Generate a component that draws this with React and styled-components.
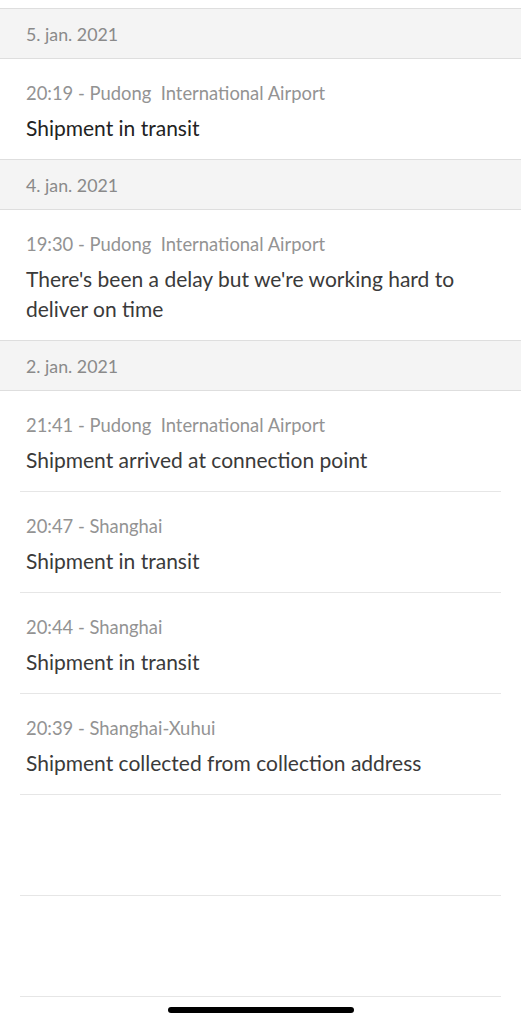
import React from 'react';
import styled, { createGlobalStyle } from 'styled-components';

const GlobalStyle = createGlobalStyle`
  html, body {
    margin: 0;
    padding: 0;
    background: #fff;
  }
  body {
    font-family: Lato, "Open Sans", sans-serif;
  }
`;

const Screen = styled.div`
  width: 521px;
  height: 1024px;
  background: #fff;
  padding-top: 8px;
  box-sizing: border-box;
  position: relative;
  overflow: hidden;
`;

const DayHeader = styled.div`
  height: 49px;
  display: flex;
  align-items: center;
  padding-left: 26px;
  background: #f4f4f4;
  border-top: 1px solid #dedede;
  border-bottom: 1px solid #dedede;
  color: #8a8a8a;
  font-size: 17.8px;
`;

const Entry = styled.div`
  margin: 0 ${(p) => (p.$inset ? '20px' : '0')};
  padding: 23px ${(p) => (p.$inset ? '6px' : '26px')} 16px;
  border-bottom: ${(p) => (p.$inset ? '1px solid #e6e6e6' : 'none')};
`;

const Meta = styled.div`
  font-size: 18.4px;
  line-height: 22px;
  color: #939393;
  white-space: pre;
`;

const Message = styled.div`
  margin-top: 9px;
  font-size: 21px;
  line-height: 30px;
  color: ${(p) => (p.$dark ? '#222' : '#3a3a3a')};
  padding-right: 40px;
`;

const EmptyRow = styled.div`
  margin: 0 20px;
  height: 100px;
  border-bottom: 1px solid #e6e6e6;
`;

const HomeIndicator = styled.div`
  position: absolute;
  left: 168px;
  top: 1007px;
  width: 186px;
  height: 6px;
  border-radius: 3px;
  background: #000;
`;

const days = [
  {
    date: '5. jan. 2021',
    entries: [
      { meta: '20:19 - Pudong  International Airport', text: 'Shipment in transit', dark: true },
    ],
  },
  {
    date: '4. jan. 2021',
    entries: [
      {
        meta: '19:30 - Pudong  International Airport',
        text: "There's been a delay but we're working hard to deliver on time",
      },
    ],
  },
  {
    date: '2. jan. 2021',
    inset: true,
    entries: [
      { meta: '21:41 - Pudong  International Airport', text: 'Shipment arrived at connection point' },
      { meta: '20:47 - Shanghai', text: 'Shipment in transit' },
      { meta: '20:44 - Shanghai', text: 'Shipment in transit' },
      { meta: '20:39 - Shanghai-Xuhui', text: 'Shipment collected from collection address' },
    ],
  },
];

const App = () => {
  return (
    <>
      <GlobalStyle />
      <Screen>
        {days.map((day) => (
          <div key={day.date}>
            <DayHeader>{day.date}</DayHeader>
            {day.entries.map((e, i) => (
              <Entry key={i} $inset={day.inset}>
                <Meta>{e.meta}</Meta>
                <Message $dark={e.dark}>{e.text}</Message>
              </Entry>
            ))}
          </div>
        ))}
        <EmptyRow />
        <EmptyRow />
        <HomeIndicator />
      </Screen>
    </>
  );
};

export default App;
